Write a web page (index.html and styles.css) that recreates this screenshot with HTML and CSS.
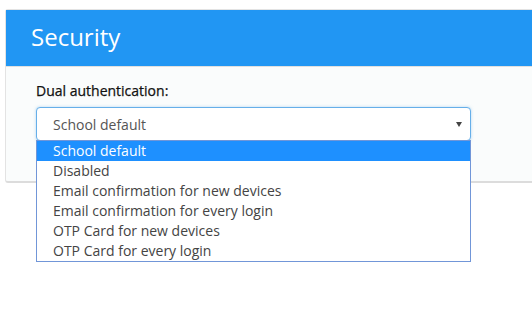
FILE: index.html
```html
<!DOCTYPE html>
<html>
<head>
<meta charset="utf-8">
<link rel="stylesheet" href="styles.css">
</head>
<body>
<div class="card">
  <div class="card-header"><h1 class="title">Security</h1></div>
  <div class="card-body">
    <label class="label">Dual authentication:</label>
    <div class="select-wrap">
      <div class="select">
        <span class="select-value">School default</span>
        <span class="caret"></span>
      </div>
      <ul class="options">
        <li class="option selected">School default</li>
        <li class="option">Disabled</li>
        <li class="option">Email confirmation for new devices</li>
        <li class="option">Email confirmation for every login</li>
        <li class="option">OTP Card for new devices</li>
        <li class="option">OTP Card for every login</li>
      </ul>
    </div>
  </div>
</div>
</body>
</html>
```
FILE: styles.css
```css
html {
  overflow: hidden;
}
html, body {
  margin: 0;
  padding: 0;
  background: #ffffff;
  font-family: "Open Sans", "Liberation Sans", sans-serif;
}
body {
  height: 320px;
}
.card {
  margin: 9px -40px 0 5px;
  border: 1px solid #e3e3e3;
  border-bottom: 2px solid #dcdcdc;
  border-radius: 3px;
  background: #fafcfc;
}
.card-header {
  background: #2196f3;
  height: 56px;
  display: flex;
  align-items: center;
  padding-left: 25px;
  border-bottom: 1px solid #e0e0e0;
}
.title {
  margin: 0;
  color: #ffffff;
  font-size: 24px;
  font-weight: 400;
  line-height: 1;
  position: relative;
  top: -1px;
}
.card-body {
  padding: 14px 0 40px 30px;
}
.label {
  display: block;
  font-size: 14px;
  font-weight: 400;
  color: #111111;
  -webkit-text-stroke: 0.25px #111111;
  line-height: 20px;
  margin-bottom: 6px;
}
.select-wrap {
  position: relative;
  width: 435px;
}
.select {
  height: 32px;
  border: 1px solid #66afe9;
  border-radius: 4px;
  background: #ffffff;
  box-shadow: 0 0 3px rgba(102, 175, 233, 0.5);
  display: flex;
  align-items: center;
  padding: 0 8px 0 16px;
  justify-content: space-between;
}
.select-value {
  font-size: 14px;
  color: #555555;
}
.caret {
  width: 0;
  height: 0;
  border-left: 3px solid transparent;
  border-right: 3px solid transparent;
  border-top: 5px solid #444444;
}
.options {
  position: absolute;
  top: 33px;
  left: 0;
  width: 433px;
  margin: 0;
  padding: 0;
  list-style: none;
  background: #ffffff;
  border: 1px solid #7196d8;
}
.option {
  font-size: 14px;
  line-height: 20px;
  height: 20px;
  padding-left: 16px;
  color: #444444;
}
.option.selected {
  background: #1e90ff;
  color: #ffffff;
}
```
